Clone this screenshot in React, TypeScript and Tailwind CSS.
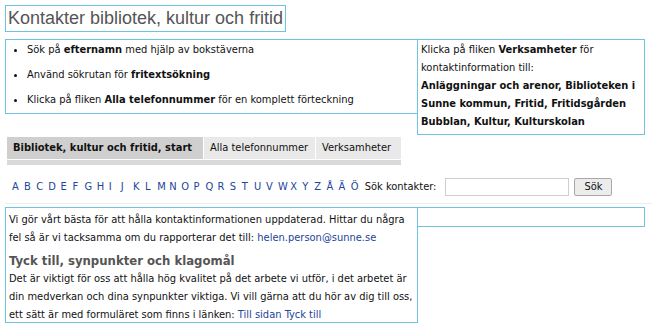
import React from "react";

const letters = "ABCDEFGHIJKLMNOPQRSTUVWXYZÅÄÖ".split("");

export default function App() {
  return (
    <div className="w-[652px] h-[327px] bg-white overflow-hidden font-['DejaVu_Sans_Condensed','DejaVu_Sans',sans-serif] text-[11px] leading-[18px] text-[#111]">
      <div className="pt-[5px] pl-[5px] flex">
        <div className="bg-[#6cc4e0] p-px">
          <h1 className="bg-white px-[2px] h-[25px] leading-[25px] font-['Liberation_Sans',Arial,sans-serif] text-[18px] text-[#555]">
            Kontakter bibliotek, kultur och fritid
          </h1>
        </div>
      </div>

      <div className="flex mt-[7px] ml-[5px]">
        <div className="w-[413px] h-[75px] border border-[#6cc4e0]">
          <ul className="list-disc pl-[21px] pt-[1px]">
            <li className="mb-[7px]">
              Sök på <b>efternamn</b> med hjälp av bokstäverna
            </li>
            <li className="mb-[7px]">
              Använd sökrutan för <b>fritextsökning</b>
            </li>
            <li>
              Klicka på fliken <b>Alla telefonnummer</b> för en komplett förteckning
            </li>
          </ul>
        </div>
        <div className="w-[228px] h-[96px] -ml-px border border-[#6cc4e0] pl-[3px] pt-[1px]">
          Klicka på fliken <b>Verksamheter</b> för kontaktinformation till:
          <br />
          <b>Anläggningar och arenor, Biblioteken i Sunne kommun, Fritid, Fritidsgården Bubblan, Kultur, Kulturskolan</b>
        </div>
      </div>

      <div className="ml-[7px] mt-[2px] w-[394px]">
        <div className="flex h-[22px] leading-[22px] whitespace-nowrap">
          <div className="bg-[#cfcfcf] px-[6px] font-bold w-[196px]">Bibliotek, kultur och fritid, start</div>
          <div className="bg-[#e9e9e9] px-[6px] ml-px w-[111px]">Alla telefonnummer</div>
          <div className="bg-[#e9e9e9] px-[6px] ml-px w-[85px]">Verksamheter</div>
        </div>
        <div className="h-[5px] bg-[#d9d9d9] mt-[1px]" />
      </div>

      <div className="flex items-center mt-[13px] ml-[12px] h-[18px]">
        <div className="flex text-[#23449a]">
          {letters.map((l) => (
            <span key={l} className="w-[12.1px]">{l}</span>
          ))}
        </div>
        <span className="ml-[2px]">Sök kontakter:</span>
        <input className="ml-[9px] w-[124px] h-[18px] border border-[#cfcfcf] bg-white" />
        <button className="ml-[5px] w-[38px] h-[18px] border border-[#a9a9a9] rounded-[2px] bg-[#ececec] text-[11px] leading-[16px]">Sök</button>
      </div>

      <div className="mt-[7px] ml-[5px] border-t border-[#eeeeee] w-[647px]" />

      <div className="flex mt-[3px] ml-[5px] items-start">
        <div className="w-[413px] h-[116px] border border-[#6cc4e0] px-[3px] pt-[3px]">
          <p>
            Vi gör vårt bästa för att hålla kontaktinformationen uppdaterad. Hittar du några fel så är vi tacksamma om du rapporterar det till:{" "}
            <a className="text-[#23449a]">helen.person@sunne.se</a>
          </p>
          <h2 className="mt-[5px] text-[13px] leading-[18px] font-bold text-[#555]">Tyck till, synpunkter och klagomål</h2>
          <p>
            Det är viktigt för oss att hålla hög kvalitet på det arbete vi utför, i det arbetet är din medverkan och dina synpunkter viktiga. Vi vill gärna att du hör av dig till oss, ett sätt är med formuläret som finns i länken:{" "}
            <a className="text-[#23449a]">Till sidan Tyck till</a>
          </p>
        </div>
        <div className="w-[228px] h-[20px] -ml-px border border-[#6cc4e0]" />
      </div>
    </div>
  );
}
